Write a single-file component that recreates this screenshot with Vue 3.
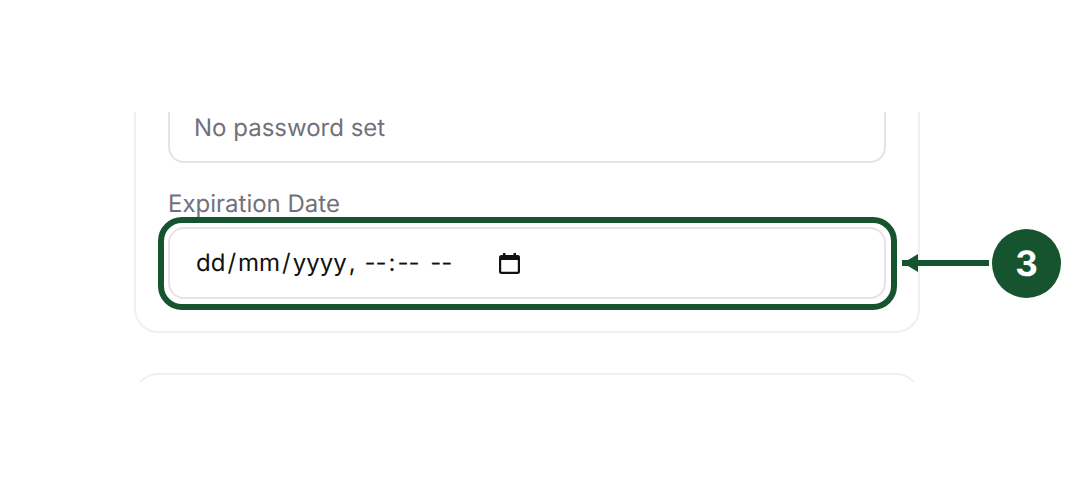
<script setup>
</script>

<template>
  <div class="page">
    <div class="viewport">
      <section class="card first">
        <div class="field no-top"><span class="placeholder">No password set</span></div>
        <label class="label">Expiration Date</label>
        <div class="highlight">
          <div class="field input">
            <span class="seg">dd</span><span class="lit">/</span><span class="seg">mm</span><span class="lit">/</span><span class="seg">yyyy</span><span class="lit">,&nbsp;</span><span class="seg">--</span><span class="lit">:</span><span class="seg">--</span><span class="lit">&nbsp;</span><span class="seg">--</span>
            <svg class="cal" viewBox="0 0 21 21" width="21" height="21" aria-hidden="true">
              <path d="M4 0h2.500v2h8V0H17v2h1.500A2.500 2.500 0 0 1 21 4.500v14a2.500 2.500 0 0 1-2.500 2.500h-16A2.500 2.500 0 0 1 0 18.500v-14A2.500 2.500 0 0 1 2.500 2H4z" fill="#111"/>
              <rect x="2.200" y="7" width="16.600" height="11.800" rx=".6" fill="#fff"/>
            </svg>
          </div>
        </div>
      </section>
      <section class="card second"></section>
    </div>
    <div class="callout">
      <svg class="arrow" viewBox="0 0 87 18" width="87" height="18" aria-hidden="true">
        <rect x="0" y="6" width="87" height="6" fill="#165430"/>
        <polygon points="1,9 16,0 16,18" fill="#165430"/>
      </svg>
      <div class="badge">3</div>
    </div>
  </div>
</template>

<style scoped>
.page {
  position: relative;
  width: 1084px;
  height: 494px;
  background: #fff;
  overflow: hidden;
  font-family: Inter, "Liberation Sans", sans-serif;
  text-rendering: geometricPrecision;
}
.viewport {
  margin-top: 112px;
  height: 270px;
  overflow: hidden;
  padding-left: 134px;
  box-sizing: border-box;
  display: flex;
  flex-direction: column;
  gap: 40px;
}
.card {
  width: 786px;
  box-sizing: border-box;
  border: 2px solid #f0f0f0;
  border-radius: 24px;
  flex: none;
}
.first {
  border-top: none;
  border-radius: 0 0 24px 24px;
  padding: 0 32px 22px;
  height: 221px;
}
.second {
  height: 60px;
}
.field {
  box-sizing: border-box;
  width: 718px;
  border: 2px solid #e4e4e4;
  border-radius: 16px;
  display: flex;
  align-items: center;
  background: #fff;
}
.no-top {
  border-top: none;
  border-radius: 0 0 16px 16px;
  height: 51px;
  padding: 0 0 18px 24px;
}
.placeholder {
  font-size: 24px;
  line-height: 32px;
  color: #71717a;
}
.label {
  display: block;
  margin-top: 25px;
  font-size: 24px;
  line-height: 32px;
  color: #71717a;
}
.highlight {
  margin: -3px 0 0 -10px;
  width: 739px;
  height: 93px;
  box-sizing: border-box;
  padding: 4px;
  border: 6px solid #165430;
  border-radius: 24px;
}
.input {
  width: 718px;
  height: 72px;
  padding-left: 24px;
  font-size: 24px;
  line-height: 32px;
  color: #111;
  white-space: pre;
}
.seg {
  padding: 0 2px;
}
.cal {
  margin-left: 45px;
  flex: none;
}
.callout {
  position: absolute;
  left: 902px;
  top: 229px;
  display: flex;
  align-items: flex-start;
  height: 69px;
}
.arrow {
  flex: none;
  margin-top: 25px;
}
.badge {
  width: 69px;
  height: 69px;
  margin-left: 3px;
  border-radius: 50%;
  background: #165430;
  color: #fff;
  font-size: 35px;
  font-weight: 700;
  display: flex;
  align-items: center;
  justify-content: center;
}
</style>
